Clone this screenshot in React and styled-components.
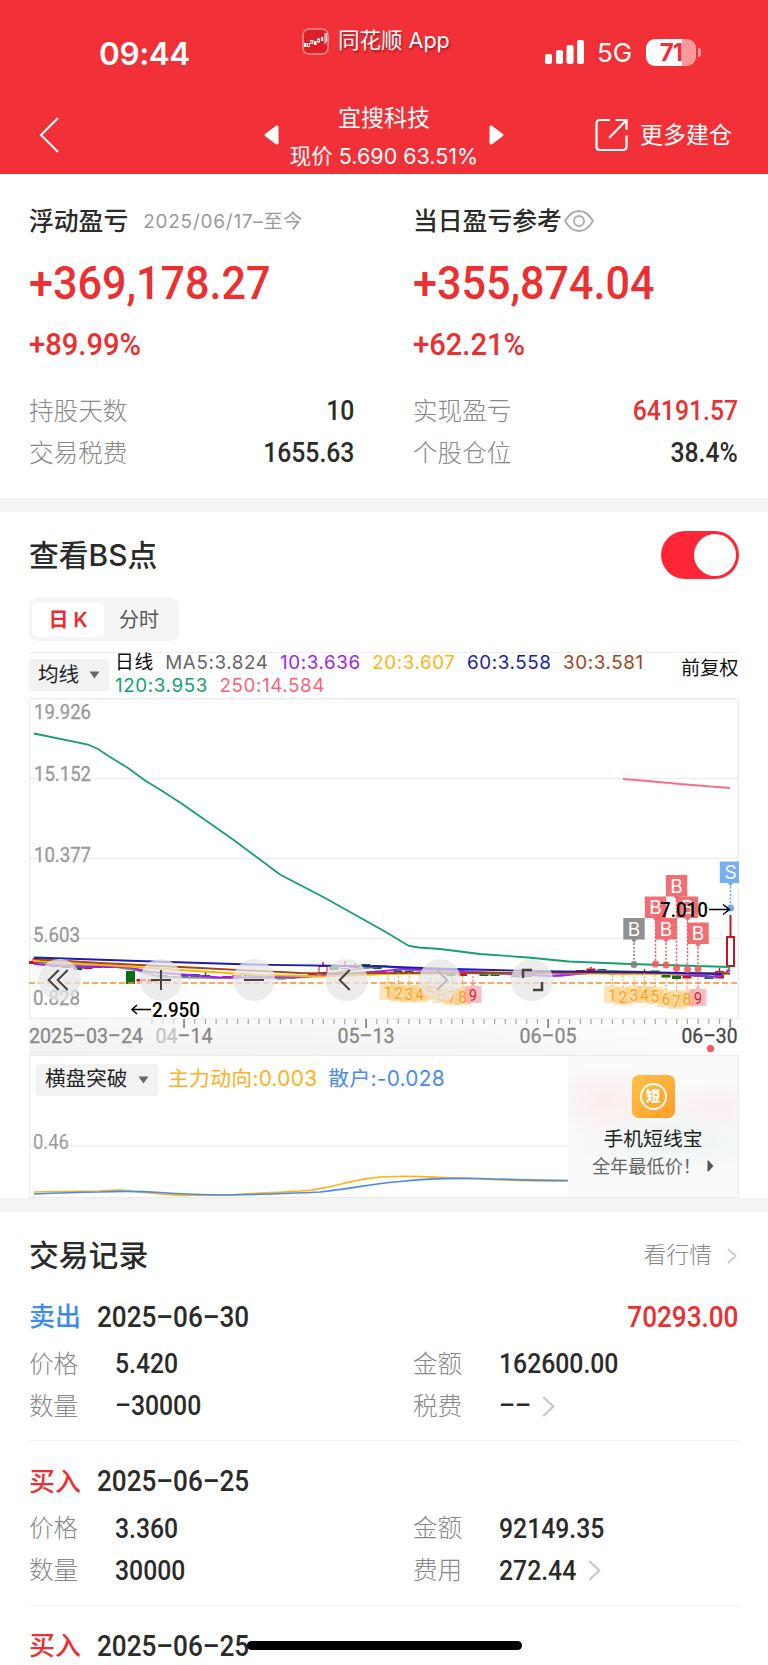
import React from "react";
import styled, { createGlobalStyle } from "styled-components";

const GlobalStyle = createGlobalStyle`
  * {
    box-sizing: border-box;
  }
  html, body {
    margin: 0;
    background: #ffffff;
  }
  body {
    height: 1665px;
    overflow: hidden;
    font-family: Inter, "Noto Sans CJK SC", sans-serif;
    line-height: 1;
    color: #2b2b2b;
  }
  svg {
    display: block;
  }
`;

const Page = styled.div`
  position: relative;
  width: 768px;
  height: 1665px;
  overflow: hidden;
  background: #ffffff;
`;

const Header = styled.header`
  height: 174px;
  background: #f23038;
  color: #ffffff;
`;

const StatusBar = styled.div`
  height: 96px;
  display: grid;
  grid-template-columns: 302px 243px 1fr;
`;

const Clock = styled.div`
  padding: 38px 0 0 99px;
  font-size: 31.5px;
  font-weight: 600;
  letter-spacing: -0.4px;
`;

const AppTag = styled.div`
  display: flex;
  align-items: center;
  gap: 9px;
  height: 28px;
  margin-top: 27px;
  font-size: 21.5px;
  font-weight: 400;
  white-space: pre;
  text-shadow: 1px 2px 2px rgba(80, 0, 0, 0.45);
`;

const Signals = styled.div`
  display: flex;
  align-items: center;
  height: 28px;
  margin-top: 38px;
`;

const Network = styled.span`
  margin-left: 12px;
  padding-top: 2px;
  width: 49px;
  font-size: 26px;
`;

const Battery = styled.div`
  width: 50px;
  height: 27px;
  border-radius: 9px;
  background: linear-gradient(90deg, #ffffff 72%, #f9989c 72%);
  color: #f23038;
  font-size: 24px;
  font-weight: 700;
  line-height: 28px;
  text-align: center;
  letter-spacing: -1px;
`;

const BatteryNub = styled.i`
  width: 3px;
  height: 9px;
  margin-left: 2px;
  border-radius: 0 3px 3px 0;
  background: #f9989c;
`;

const NavBar = styled.nav`
  height: 78px;
  padding: 0 36px 0 39px;
  display: grid;
  grid-template-columns: 225px 240px 1fr;
  align-items: center;
`;

const StockSwitch = styled.div`
  display: flex;
  align-items: center;
  justify-content: space-between;
`;

const StockTitle = styled.div`
  padding-top: 5px;
  text-align: center;
  font-size: 23px;
  white-space: nowrap;
`;

const StockPrice = styled.div`
  margin-top: 14px;
  font-size: 21.5px;
  line-height: 24px;
`;

const MoreButton = styled.div`
  display: flex;
  align-items: center;
  justify-content: flex-end;
  gap: 11px;
  font-size: 23px;
`;

const Summary = styled.section`
  height: 324px;
  padding: 34px 29px 0;
  display: grid;
  grid-template-columns: 325px 325px;
  column-gap: 59px;
`;

const SummaryHead = styled.div`
  display: flex;
  align-items: center;
  height: 26px;
  font-size: 24.8px;
  font-weight: 500;
`;

const EyeBox = styled.span`
  margin-left: 2px;
`;

const Period = styled.span`
  margin-left: 15px;
  font-size: 19px;
  font-weight: 400;
  letter-spacing: 0.75px;
  color: #999999;
`;

// Narrow numerals used for every amount
const Num = styled.span`
  display: inline-block;
  font-family: Roboto, sans-serif;
  font-weight: 500;
  font-size: ${(p) => p.$size || 27.5}px;
  color: ${(p) => p.$color || "#2b2b2b"};
  transform: scaleX(${(p) => p.$scale || 0.9});
  transform-origin: ${(p) => p.$origin || "left"} center;
  white-space: nowrap;
`;

const BigAmount = styled.div`
  height: 46px;
  margin-top: 26px;
`;

const Percent = styled.div`
  height: 32px;
  margin-top: 23px;
`;

const StatList = styled.div`
  margin-top: 29px;
`;

const StatRow = styled.div`
  display: flex;
  align-items: center;
  justify-content: space-between;
  height: 42px;
`;

const Label = styled.span`
  font-size: 24.6px;
  font-weight: 300;
  color: #888888;
`;

const Band = styled.div`
  height: 14px;
  background: #f4f4f4;
`;

const SectionHead = styled.div`
  display: flex;
  align-items: center;
  justify-content: space-between;
  height: ${(p) => p.$height}px;
  padding: ${(p) => p.$pad}px 29px 0;
`;

const SectionTitle = styled.h2`
  margin: 0;
  padding-top: 2px;
  font-size: 29.8px;
  font-weight: 500;
`;

const Toggle = styled.div`
  width: 78px;
  height: 48px;
  padding: 3px;
  display: flex;
  justify-content: flex-end;
  border-radius: 24px;
  background: #ff2638;
`;

const Knob = styled.i`
  width: 42px;
  height: 42px;
  border-radius: 50%;
  background: #ffffff;
`;

const Tabs = styled.div`
  display: flex;
  width: 150px;
  height: 43px;
  margin: 0 0 11px 29px;
  padding: 4px 3px;
  border-radius: 8px;
  background: #f5f5f5;
`;

const Tab = styled.div`
  display: flex;
  align-items: center;
  justify-content: center;
  width: ${(p) => (p.$active ? 72 : 70)}px;
  border-radius: 6px;
  font-size: 20px;
  font-weight: ${(p) => (p.$active ? 600 : 400)};
  color: ${(p) => (p.$active ? "#f02a2e" : "#555555")};
  background: ${(p) => (p.$active ? "#ffffff" : "none")};
`;

const LegendBar = styled.div`
  display: flex;
  height: 46px;
  margin: 0 29px;
  border-top: 1px solid #efefef;
`;

const LegendPicker = styled.div`
  padding-top: 6px;
`;

const Dropdown = styled.div`
  display: flex;
  align-items: center;
  justify-content: space-between;
  width: ${(p) => p.$width}px;
  height: 32px;
  padding: 0 9px;
  border-radius: 4px;
  background: #f2f2f2;
  font-size: 20.6px;
  color: #222222;
`;

const Legend = styled.div`
  flex: 1;
  display: flex;
  flex-wrap: wrap;
  align-content: flex-start;
  column-gap: 11.5px;
  margin-top: -2px;
  padding-left: 6px;
`;

const LegendItem = styled.span`
  height: 23px;
  line-height: 23px;
  font-size: 18.8px;
  letter-spacing: 0.6px;
  white-space: nowrap;
  color: ${(p) => p.$color};
`;

const Adjust = styled.div`
  width: 58px;
  padding-top: 6px;
  font-size: 19.2px;
  color: #111111;
`;

const ChartBox = styled.div`
  height: 357px;
  margin: 0 29px;
`;

const Indicator = styled.div`
  display: flex;
  height: 143px;
  margin: 0 29px;
  border: 1px solid #ececec;
`;

const IndicatorMain = styled.div`
  width: 538px;
`;

const IndicatorHead = styled.div`
  display: flex;
  align-items: center;
  height: 42px;
  padding: 5px 0 0 6px;
`;

const IndicatorValue = styled.span`
  margin-left: ${(p) => p.$gap}px;
  font-size: 20.8px;
  letter-spacing: 0.3px;
  color: ${(p) => p.$color};
`;

const Promo = styled.div`
  flex: 1;
  display: flex;
  flex-direction: column;
  align-items: center;
  padding-top: 19px;
  background: radial-gradient(ellipse 60px 36px at 22% 32%, rgba(252, 226, 228, 0.6), transparent),
    radial-gradient(ellipse 70px 26px at 88% 36%, rgba(252, 226, 228, 0.5), transparent),
    radial-gradient(ellipse 110px 34px at 60% 60%, rgba(232, 242, 238, 0.8), transparent),
    #fafafa;
`;

const PromoIcon = styled.div`
  display: flex;
  align-items: center;
  justify-content: center;
  width: 43px;
  height: 43px;
  border-radius: 7px;
  background: linear-gradient(135deg, #ffc145, #ff9d2a);
`;

const PromoRing = styled.div`
  width: 27px;
  height: 27px;
  border: 2px solid #ffffff;
  border-radius: 50%;
  color: #ffffff;
  font-size: 14px;
  font-weight: 900;
  line-height: 22px;
  text-align: center;
`;

const PromoTitle = styled.div`
  margin-top: 12px;
  font-size: 19.8px;
  color: #222222;
`;

const PromoText = styled.div`
  display: flex;
  align-items: center;
  gap: 6px;
  margin-top: 7px;
  font-size: 18.2px;
  color: #666666;
`;

const MoreLink = styled.div`
  display: flex;
  align-items: center;
  gap: 15px;
  padding: 2px 2px 0 0;
  font-size: 22.8px;
  font-weight: 300;
  color: #888888;
`;

const Record = styled.article`
  height: 164.5px;
  margin: 0 29px;
  padding: 20.5px 1px 0 0;
  border-bottom: 1px solid #f4f4f4;
`;

const RecordHead = styled.div`
  display: flex;
  align-items: center;
  height: 40px;
  margin-bottom: 6px;
`;

const Side = styled.span`
  width: 68px;
  font-size: 26px;
  font-weight: 500;
  color: ${(p) => (p.$sell ? "#3c8cf0" : "#f02e32")};
`;

const Profit = styled.div`
  margin-left: auto;
`;

const RecordGrid = styled.div`
  display: grid;
  grid-template-columns: 86px 298px 86px 1fr;
  grid-auto-rows: 42px;
  align-items: center;
`;

const Value = styled.div`
  display: flex;
  align-items: center;
  gap: ${(p) => p.$gap}px;
`;

const HomeBar = styled.div`
  position: absolute;
  left: 247px;
  top: 1641px;
  width: 275px;
  height: 9px;
  border-radius: 5px;
  background: #000000;
`;

const RED = "#ec2f31";

const Chevron = ({ w = 12, h = 20 }) => (
  <svg width={w} height={h} viewBox="0 0 12 20" fill="none" stroke="#c6c6c6" strokeWidth="2">
    <path d="M1 1l9.500 9L1 19" />
  </svg>
);

const Caret = () => (
  <svg width="11" height="8" viewBox="0 0 11 8">
    <path d="M0.500 0.500h10l-5 7z" fill="#666666" />
  </svg>
);

const Arrow = ({ flip }) => (
  <svg width="15" height="20" viewBox="0 0 15 20">
    <path
      d="M13 0.500Q14.500 0.500 14.500 2V18Q14.500 19.500 13 19.500Q12 19.500 11 18.500L1 11Q0 10 1 9L11 1.500Q12 0.500 13 0.500z"
      fill="#ffffff"
      transform={flip ? "matrix(-1 0 0 1 15 0)" : undefined}
    />
  </svg>
);

const AppLogo = () => (
  <svg width="27" height="27" viewBox="0 0 27 27">
    <rect x="1" y="1" width="25" height="25" rx="6" fill="#dd2027" stroke="#f78f92" strokeWidth="1.500" />
    <g fill="#ffffff">
      <rect x="2" y="15" width="2.500" height="4" />
      <rect x="12" y="13" width="2.500" height="4" />
      <rect x="19" y="9" width="2.200" height="4" />
    </g>
    <g fill="none" stroke="#ffffff">
      <rect x="5.500" y="15.500" width="2" height="3" />
      <rect x="8.800" y="12.500" width="2" height="3" />
      <rect x="15.500" y="11" width="2" height="3" />
      <path d="M23 16V5.500h1.500V14" />
    </g>
  </svg>
);

const Bars = () => (
  <svg width="40" height="24" viewBox="0 0 40 24" fill="#ffffff">
    <rect x="0" y="14" width="7" height="10" rx="2" />
    <rect x="11" y="10" width="7" height="14" rx="2" />
    <rect x="21.500" y="5" width="7" height="19" rx="2" />
    <rect x="32" y="0" width="7" height="24" rx="2" />
  </svg>
);

const ShareIcon = () => (
  <svg width="34" height="34" viewBox="0 0 34 34" fill="none" stroke="#ffffff" strokeWidth="2.200">
    <path d="M15 2H5Q1.500 2 1.500 5.500V28.500Q1.500 32 5 32H28Q31.500 32 31.500 28.500V17.500" />
    <path d="M20.500 2H31.500V12M31.500 2L14 20" />
  </svg>
);

const Eye = () => (
  <svg width="30" height="22" viewBox="0 0 30 22" fill="none" stroke="#aaaaaa" strokeWidth="1.800">
    <path d="M1 11Q7 1 15 1T29 11Q23 21 15 21T1 11z" />
    <circle cx="15" cy="11" r="5" />
  </svg>
);

// [center x, top, bottom, rising, hollow, wick top]
const candles = [
  [32, 961, 964, 1],
  [37, 958, 963, 1, 1],
  [44, 960, 963, 0],
  [55, 965, 967, 0],
  [66, 966, 968, 0],
  [78, 967, 970, 0],
  [88, 966, 969, 1, 0, 964],
  [98, 966, 968, 1],
  [109, 966, 968, 0],
  [130.5, 971, 984, 0],
  [141, 979, 981.5, 1],
  [152, 979, 982, 1],
  [163, 975, 977, 0],
  [173, 976, 978, 1],
  [184, 974, 978, 0],
  [195, 974, 977, 0],
  [205.500, 975, 978, 0, 0, 972],
  [216, 977, 979, 0],
  [227, 976, 978, 1],
  [237, 975, 977, 1],
  [248, 974, 976, 0],
  [258, 975, 977, 0],
  [270, 977, 979, 0],
  [281, 977, 979.500, 0],
  [291, 977, 979, 1],
  [302, 976, 978, 1],
  [312.500, 974, 976, 1],
  [323, 966, 973, 1, 1, 962],
  [334, 967, 970, 0, 0, 964],
  [345, 966, 969, 1, 1, 961],
  [355, 965, 968, 1, 0, 963],
  [366, 964, 966, 0],
  [377, 965, 969, 0],
  [398, 970.500, 973, 0],
  [409, 970.500, 973, 0],
  [451, 973.500, 976, 0],
  [462.500, 973.500, 976, 1, 0, 970],
  [484, 974, 976, 0],
  [495, 974, 976, 0],
  [516, 974, 977, 0],
  [527, 974, 977, 0],
  [580.500, 970, 972, 1],
  [591, 968.500, 971, 1, 0, 967],
  [602, 969, 971, 0],
  [612.500, 970.500, 974.500, 0],
  [623, 972.500, 974.500, 1],
  [644.500, 971, 973, 1, 0, 969],
  [655, 970.500, 974.500, 0],
  [666, 974, 977.500, 0],
  [676.500, 975.500, 979, 0],
  [687, 976, 978.500, 1],
  [698, 975, 977, 0],
  [709, 977, 979, 0],
  [719.500, 971, 978.500, 1, 0, 968],
];

// MA curves, cheapest way is plain point lists
const lines = [
  ["#8a8a8a", "34,964 110,966 135,970 160,977 220,978 290,978 320,976 350,970 384,966 405,969 430,972 500,974 560,976 600,971 650,972 715,977 723,975 730,968"],
  ["#9b1eff", "34,964 60,966 85,967 118,966.500 130,967.500 150,972 190,975 220,977.500 300,976.500 330,975 384,971 405,969 440,970 500,973 550,976 590,973 640,973 680,974.500 712,976.500 722,975.500 730,970"],
  ["#ffb400", "34,961 120,966 180,970 260,975 325,976.500 384,974 500,972.500 640,974 730,973.500"],
  ["#a0461a", "34,959 100,963 200,968 300,973 325,973.500 384,973 500,973 600,972.500 660,973 730,973.500"],
  ["#1c1cb0", "34,957.500 138,961 250,964.500 384,966.500 435,968.500 493,970 560,971.500 640,972 722,974"],
  ["#16a070", "34,733.500 88,744.500 98,749 110,757 128,768 145,780.500 163,791.500 183,804.500 233,839.500 280,874.500 325,898 384,931 409,946 419,947.500 440,949 480,954 528,957.500 569,961.500 630,964 730,967"],
  ["#f77080", "623,779 642,780.500 680,784 730,788"],
];

const tags = [
  [388, 991, 971], [398.5, 992.5, 973], [409, 993.5, 973], [419.5, 993, 974], [430.5, 991, 974],
  [441, 994, 974], [452, 996, 976], [462.5, 996, 976], [473, 994, 976],
  [612.5, 994, 975], [623, 996, 975], [634, 994, 973], [644.5, 994, 973], [655, 995, 975],
  [666, 998, 978], [676.5, 1000, 979], [687, 998, 979], [698, 997, 978],
];

// [label, x, top, dot y, color]
const markers = [
  ["B", 634, 918, 964.500, "#808080"],
  ["B", 655.500, 896.500, 964, "#ee5a5e"],
  ["B", 687.500, 896.500, 969.500, "#ee5a5e"],
  ["B", 666, 918, 965, "#ee5a5e"],
  ["B", 676.500, 875, 968.500, "#ee5a5e"],
  ["B", 698, 922.500, 969, "#ee5a5e"],
  ["S", 730.500, 861.500, 908, "#62a3f0"],
];

const axisLabels = [
  ["19.926", 34, 57, 719],
  ["15.152", 34, 57, 781],
  ["10.377", 34, 57, 861.500],
  ["5.603", 33, 47, 942],
  ["0.828", 33, 47, 1004.500],
];

const controls = [
  [59.7, "M-1 -10L-11 0L-1 10M8 -10L-2 0L8 10"],
  [161, "M-10 0H10M0 -10V10"],
  [254, "M-10 0H10"],
  [346.7, "M3 -10L-7 0L3 10"],
  [440, "M-3 -10L7 0L-3 10"],
  [532, "M-9 -2V-10H0M10 2V10H1"],
];

const Chart = () => (
  <svg width="710" height="357" viewBox="29 698 710 357" fontFamily="Roboto, sans-serif">
    <defs>
      <linearGradient id="axis" x1="0" y1="0" x2="1" y2="0">
        <stop offset="0" stopColor="#f1f1f1" />
        <stop offset="0.6" stopColor="#f4f4f4" />
        <stop offset="1" stopColor="#fdfdfd" />
      </linearGradient>
      <linearGradient id="fade" x1="0" y1="0" x2="0" y2="1">
        <stop offset="0" stopColor="#ffffff" stopOpacity="0.6" />
        <stop offset="1" stopColor="#ffffff" stopOpacity="0" />
      </linearGradient>
    </defs>
    <rect x="29" y="1018" width="710" height="37" fill="url(#axis)" />
    <rect x="29" y="1018" width="710" height="37" fill="url(#fade)" />
    <g stroke="#eeeeee" strokeWidth="1.500">
      <path d="M29 698.700H739M29 778.500H739M29 858.500H739M29 938.500H739M29 1018.500H739" />
      <path d="M29.500 698V1018M738.300 698V1018" />
    </g>
    <g fontSize="21" fill="#999999" stroke="#999999" strokeWidth="0.300">
      {axisLabels.map(([t, x, w, y]) => (
        <text key={t} x={x} y={y} textLength={w} lengthAdjust="spacingAndGlyphs">{t}</text>
      ))}
    </g>

    {candles.map(([x, top, bottom, up, hollow, wick]) => {
      const color = up ? "#c8141e" : "#0a6e14";
      return (
        <g key={x} stroke={color} fill={hollow ? "#ffffff" : color}>
          {wick && <path d={`M${x} ${wick}V${top}`} strokeWidth="1.500" />}
          <rect x={x - 4} y={top + 0.5} width="8" height={bottom - top - 1} />
        </g>
      );
    })}
    <path d="M730.500 915V936" stroke="#c8141e" strokeWidth="2" />
    <rect x="727" y="937" width="7" height="29" fill="#ffffff" stroke="#c8141e" strokeWidth="2" />

    {lines.map(([color, points]) => (
      <polyline key={color} points={points} fill="none" stroke={color} strokeWidth="1.800" />
    ))}
    <path d="M29 983H738" stroke="#ff8a28" strokeWidth="1.700" strokeDasharray="6 3" />

    {tags.map(([x, y, from], i) => {
      const last = i % 9 === 8;
      return (
        <g key={x}>
          <path d={`M${x} ${from}V${y - 8}`} stroke={last ? "#e06a70" : "#ffa726"} strokeDasharray="2 1.500" />
          <path
            d={`M${x - 8.5} ${y - 8}h6l2.500 -3l2.500 3h6v17h-17z`}
            fill={last ? "#f58a90" : "#ffb84d"}
            fillOpacity={last ? 0.55 : 0.4}
          />
          <text
            x={x - 4}
            y={y + 6.5}
            fontSize="17"
            textLength="8"
            lengthAdjust="spacingAndGlyphs"
            fill={last ? "#d81e2c" : "#ff9c10"}
          >
            {(i % 9) + 1}
          </text>
        </g>
      );
    })}

    {markers.map(([label, x, top, dot, color]) => (
      <g key={x}>
        <path d={`M${x} ${top + 25}V${dot - 3}`} stroke={color} strokeWidth="1.500" strokeDasharray="2 1.700" />
        <circle cx={x} cy={dot} r="3.500" fill={color} fillOpacity="0.9" />
        <path d={`M${x - 10.7} ${top}h21.400v21.500h-8l-2.700 3.500l-2.700 -3.500h-8z`} fill={color} fillOpacity="0.87" />
        <text x={x} y={top + 17.5} fontFamily="Inter, sans-serif" fontSize="19" textAnchor="middle" fill="#ffffff">
          {label}
        </text>
      </g>
    ))}

    <g fill="#000000" fontSize="20.500" fontWeight="500">
      <text x="660" y="916.500" textLength="48" lengthAdjust="spacingAndGlyphs">7.010</text>
      <text x="152" y="1016.500" fontSize="20" textLength="48" lengthAdjust="spacingAndGlyphs">2.950</text>
    </g>
    <g stroke="#000000" strokeWidth="1.500" fill="none">
      <path d="M709 909.500H729M723 904.500L729.500 909.500L723 914.500" />
      <path d="M151 1009.500H132M137 1005L132 1009.500L137 1014" />
    </g>

    {controls.map(([x, d], i) => (
      <g key={x} transform={`translate(${x} 980)`}>
        <circle r="21" fill="#e6e6e6" fillOpacity="0.75" />
        <path d={d} fill="none" stroke={i === 4 ? "#bbbbbb" : "#444444"} strokeWidth={i === 5 ? 2.5 : 2} />
      </g>
    ))}

    {Array.from({ length: 55 }, (_, i) => {
      const major = i % 17 === 3;
      return (
        <path
          key={i}
          d={`M${151.9 + i * 10.71} 1019V${major ? 1028 : 1024}`}
          stroke={major ? "#888888" : "#a6a6a6"}
          strokeWidth={major ? 1.800 : 1.200}
          opacity={i < 3 ? 0.4 : 1}
        />
      );
    })}
    <g fontSize="20.500" fill="#888888" stroke="#888888" strokeWidth="0.300">
      <text x="29" y="1043" textLength="114" lengthAdjust="spacingAndGlyphs">2025–03–24</text>
      <text x="155.500" y="1043" textLength="57" lengthAdjust="spacingAndGlyphs">
        <tspan fill="#c4c4c4" stroke="#c4c4c4">04</tspan>–14
      </text>
      <text x="337.500" y="1043" textLength="57" lengthAdjust="spacingAndGlyphs">05–13</text>
      <text x="519.500" y="1043" textLength="57" lengthAdjust="spacingAndGlyphs">06–05</text>
      <text x="681.500" y="1043" textLength="56" lengthAdjust="spacingAndGlyphs" fill="#444444" stroke="#444444">06–30</text>
    </g>
    <circle cx="710.500" cy="1048.700" r="3.600" fill="#f25c5c" />
  </svg>
);

const FlowChart = () => (
  <svg width="538" height="98" viewBox="30 1098 538 98" fill="none">
    <path d="M30 1146H568" stroke="#eeeeee" strokeWidth="1.500" />
    <text x="33" y="1149" fontFamily="Roboto, sans-serif" fontSize="20.500" fill="#999999" textLength="36" lengthAdjust="spacingAndGlyphs">
      0.46
    </text>
    <path
      d="M34 1192Q80 1191 100 1191Q112 1190 120 1190Q130 1191 150 1193Q170 1195.500 200 1195.500Q225 1196 250 1193.500Q290 1192 312 1190C340 1186 360 1176.500 395 1176.500C420 1176 440 1177.500 470 1178.500Q520 1181 568 1181"
      stroke="#ffb414"
      strokeWidth="1.700"
    />
    <path
      d="M34 1194Q70 1192.500 100 1192Q130 1190.500 160 1192.500Q190 1194.500 230 1195Q280 1194 320 1192C350 1189 370 1184 400 1181.500C430 1178 450 1178 480 1178.500Q530 1180 568 1180.500"
      stroke="#4a8af0"
      strokeWidth="1.700"
    />
  </svg>
);

const legend = [
  ["日线", "#111111"],
  ["MA5:3.824", "#666666"],
  ["10:3.636", "#9b1eff"],
  ["20:3.607", "#ffb414"],
  ["60:3.558", "#1c1ca8"],
  ["30:3.581", "#a0461a"],
  ["120:3.953", "#16a070"],
  ["250:14.584", "#fa6478"],
];

const summary = [
  {
    title: "浮动盈亏",
    period: "2025/06/17–至今",
    amount: "+369,178.27",
    percent: "+89.99%",
    stats: [["持股天数", "10"], ["交易税费", "1655.63"]],
  },
  {
    title: "当日盈亏参考",
    amount: "+355,874.04",
    percent: "+62.21%",
    stats: [["实现盈亏", "64191.57", RED], ["个股仓位", "38.4%"]],
  },
];

const records = [
  { sell: true, date: "2025–06–30", profit: "70293.00", price: "5.420", total: "162600.00", count: "–30000", feeName: "税费", fee: "––" },
  { date: "2025–06–25", price: "3.360", total: "92149.35", count: "30000", feeName: "费用", fee: "272.44" },
  { date: "2025–06–25" },
];

const TradeRecord = ({ item }) => (
  <Record>
    <RecordHead>
      <Side $sell={item.sell}>{item.sell ? "卖出" : "买入"}</Side>
      <Num $size={29}>{item.date}</Num>
      {item.profit && (
        <Profit>
          <Num $size={29} $origin="right" $color={RED}>{item.profit}</Num>
        </Profit>
      )}
    </RecordHead>
    {item.price && (
      <RecordGrid>
        <Label>价格</Label>
        <Num>{item.price}</Num>
        <Label>金额</Label>
        <Num>{item.total}</Num>
        <Label>数量</Label>
        <Num>{item.count}</Num>
        <Label>{item.feeName}</Label>
        <Value $gap={item.sell ? 8 : 3}>
          <Num>{item.fee}</Num>
          <Chevron w={13} h={21} />
        </Value>
      </RecordGrid>
    )}
  </Record>
);

const App = () => {
  return (
    <Page>
      <GlobalStyle />
      <Header>
        <StatusBar>
          <Clock>09:44</Clock>
          <AppTag>
            <AppLogo />
            <span>同花顺 App</span>
          </AppTag>
          <Signals>
            <Bars />
            <Network>5G</Network>
            <Battery>71</Battery>
            <BatteryNub />
          </Signals>
        </StatusBar>
        <NavBar>
          <svg width="20" height="36" viewBox="0 0 20 36" fill="none" stroke="#ffffff" strokeWidth="2">
            <path d="M19 1L2 18L19 35" />
          </svg>
          <StockSwitch>
            <Arrow />
            <StockTitle>
              宜搜科技
              <StockPrice>现价 5.690 63.51%</StockPrice>
            </StockTitle>
            <Arrow flip />
          </StockSwitch>
          <MoreButton>
            <ShareIcon />
            更多建仓
          </MoreButton>
        </NavBar>
      </Header>

      <Summary>
        {summary.map((s) => (
          <div key={s.title}>
            <SummaryHead>
              {s.title}
              {s.period ? <Period>{s.period}</Period> : <EyeBox><Eye /></EyeBox>}
            </SummaryHead>
            <BigAmount>
              <Num $size={46} $scale={0.937} $color={RED}>{s.amount}</Num>
            </BigAmount>
            <Percent>
              <Num $size={31} $scale={0.94} $color={RED}>{s.percent}</Num>
            </Percent>
            <StatList>
              {s.stats.map(([name, value, color]) => (
                <StatRow key={name}>
                  <Label>{name}</Label>
                  <Num $origin="right" $color={color}>{value}</Num>
                </StatRow>
              ))}
            </StatList>
          </div>
        ))}
      </Summary>

      <Band />
      <SectionHead $height={86} $pad={0}>
        <SectionTitle>查看BS点</SectionTitle>
        <Toggle>
          <Knob />
        </Toggle>
      </SectionHead>
      <Tabs>
        <Tab $active>日 K</Tab>
        <Tab>分时</Tab>
      </Tabs>
      <LegendBar>
        <LegendPicker>
          <Dropdown $width={80}>
            均线
            <Caret />
          </Dropdown>
        </LegendPicker>
        <Legend>
          {legend.map(([text, color]) => (
            <LegendItem key={text} $color={color}>{text}</LegendItem>
          ))}
        </Legend>
        <Adjust>前复权</Adjust>
      </LegendBar>
      <ChartBox>
        <Chart />
      </ChartBox>
      <Indicator>
        <IndicatorMain>
          <IndicatorHead>
            <Dropdown $width={122}>
              横盘突破
              <Caret />
            </Dropdown>
            <IndicatorValue $gap={10} $color="#ffb020">主力动向:0.003</IndicatorValue>
            <IndicatorValue $gap={11} $color="#4a8af0">散户:-0.028</IndicatorValue>
          </IndicatorHead>
          <FlowChart />
        </IndicatorMain>
        <Promo>
          <PromoIcon>
            <PromoRing>短</PromoRing>
          </PromoIcon>
          <PromoTitle>手机短线宝</PromoTitle>
          <PromoText>
            全年最低价！
            <svg width="7" height="12" viewBox="0 0 7 12">
              <path d="M0.500 0.500h1l5 5.500l-5 5.500h-1z" fill="#555555" />
            </svg>
          </PromoText>
        </Promo>
      </Indicator>

      <Band />
      <SectionHead $height={64.5} $pad={21}>
        <SectionTitle>交易记录</SectionTitle>
        <MoreLink>
          看行情
          <Chevron w={10} h={16} />
        </MoreLink>
      </SectionHead>
      {records.map((r, i) => (
        <TradeRecord key={i} item={r} />
      ))}
      <HomeBar />
    </Page>
  );
};

export default App;
